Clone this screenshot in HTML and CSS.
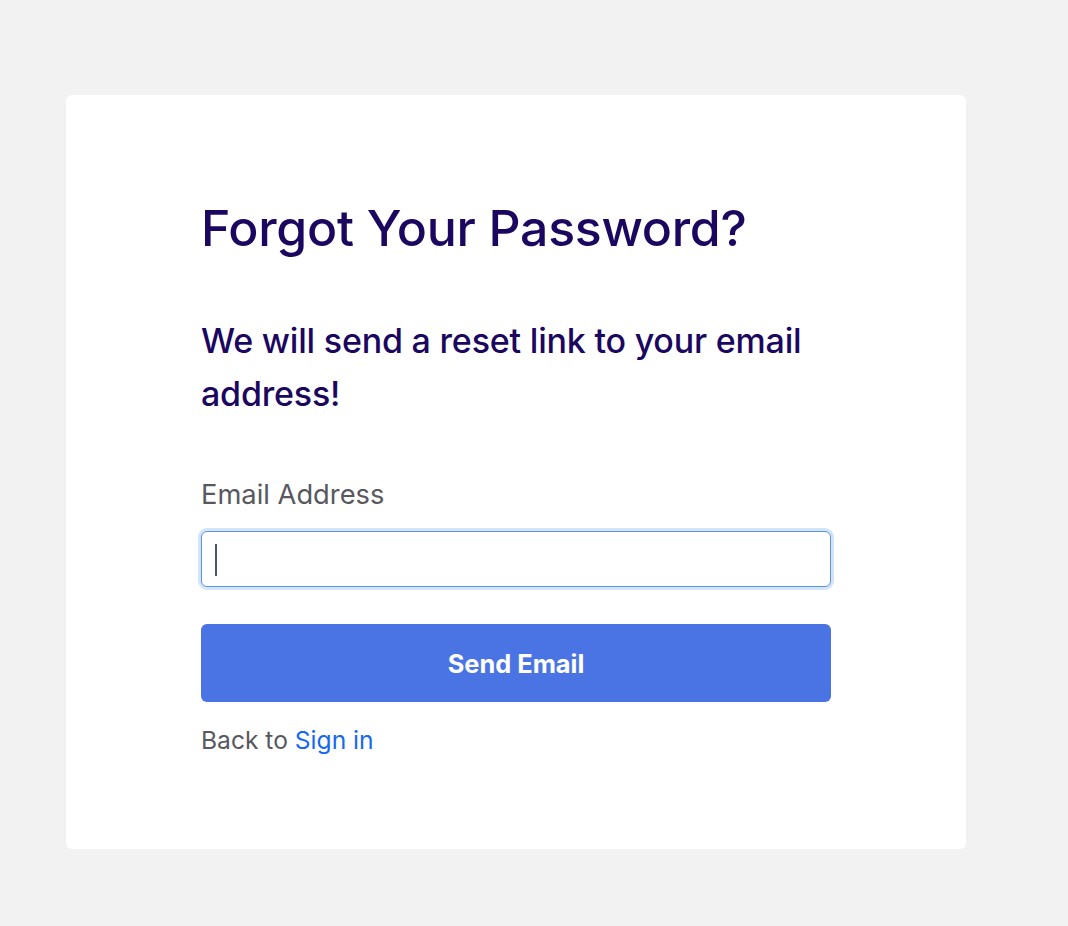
FILE: index.html
```html
<!DOCTYPE html>
<html lang="en">
<head>
    <meta charset="UTF-8">
    <meta name="viewport" content="width=device-width, initial-scale=1.0">
    <title>Forgot Password</title>
    <link rel="stylesheet" href="styles.css">
</head>
<body>
    <div class="container">
        <div class="content">
            <h1>Forgot Your Password?</h1>
            <p class="subtitle">We will send a reset link to your email address!</p>

            <form action="#" method="POST">
                <div class="form-group">
                    <label for="email">Email Address</label>
                    <div class="input-wrap">
                        <input type="email" id="email" name="email">
                        <span class="caret"></span>
                    </div>
                </div>

                <button type="submit" class="send-button">Send Email</button>
            </form>

            <p class="back">Back to <a href="#">Sign in</a></p>
        </div>
    </div>
</body>
</html>
```

FILE: styles.css
```css
body {
    font-family: Inter, "Noto Sans", sans-serif;
    margin: 0;
    padding: 0;
    background-color: #f2f2f2;
}
.container {
    width: 900px;
    height: 754px;
    margin: 95px 0 0 66px;
    background-color: #fff;
    border-radius: 6px;
    box-sizing: border-box;
    padding: 105px 135px 0 135px;
}
.content {
    width: 630px;
}
h1 {
    margin: 0;
    font-size: 50px;
    font-weight: 500;
    line-height: 56px;
    color: #1b0760;
    letter-spacing: -0.3px;
}
.subtitle {
    margin: 58px 0 0 0;
    font-size: 34px;
    font-weight: 500;
    line-height: 53px;
    color: #1b0760;
    letter-spacing: -0.2px;
}
.form-group {
    margin-top: 58px;
}
label {
    display: block;
    font-size: 27.3px;
    line-height: 34px;
    color: #58585e;
    margin-bottom: 19px;
}
.input-wrap {
    position: relative;
}
input[type="email"] {
    display: block;
    width: 100%;
    height: 56px;
    box-sizing: border-box;
    border: 1px solid #5b93e6;
    border-radius: 6px;
    box-shadow: 0 0 0 3px #d3e4fb;
    outline: none;
    padding: 0 14px;
    font-family: inherit;
    font-size: 22px;
}
.caret {
    position: absolute;
    left: 14px;
    top: 13px;
    width: 2px;
    height: 32px;
    background-color: #4d566a;
}
.send-button {
    display: block;
    width: 100%;
    height: 78px;
    margin-top: 37px;
    background-color: #4a74e4;
    color: #fff;
    border: none;
    border-radius: 6px;
    font-family: inherit;
    font-size: 25.4px;
    font-weight: 700;
    cursor: pointer;
}
.back {
    margin: 22px 0 0 0;
    font-size: 24.6px;
    line-height: 32px;
    color: #58585e;
}
.back a {
    color: #1668f2;
    text-decoration: none;
}
```
